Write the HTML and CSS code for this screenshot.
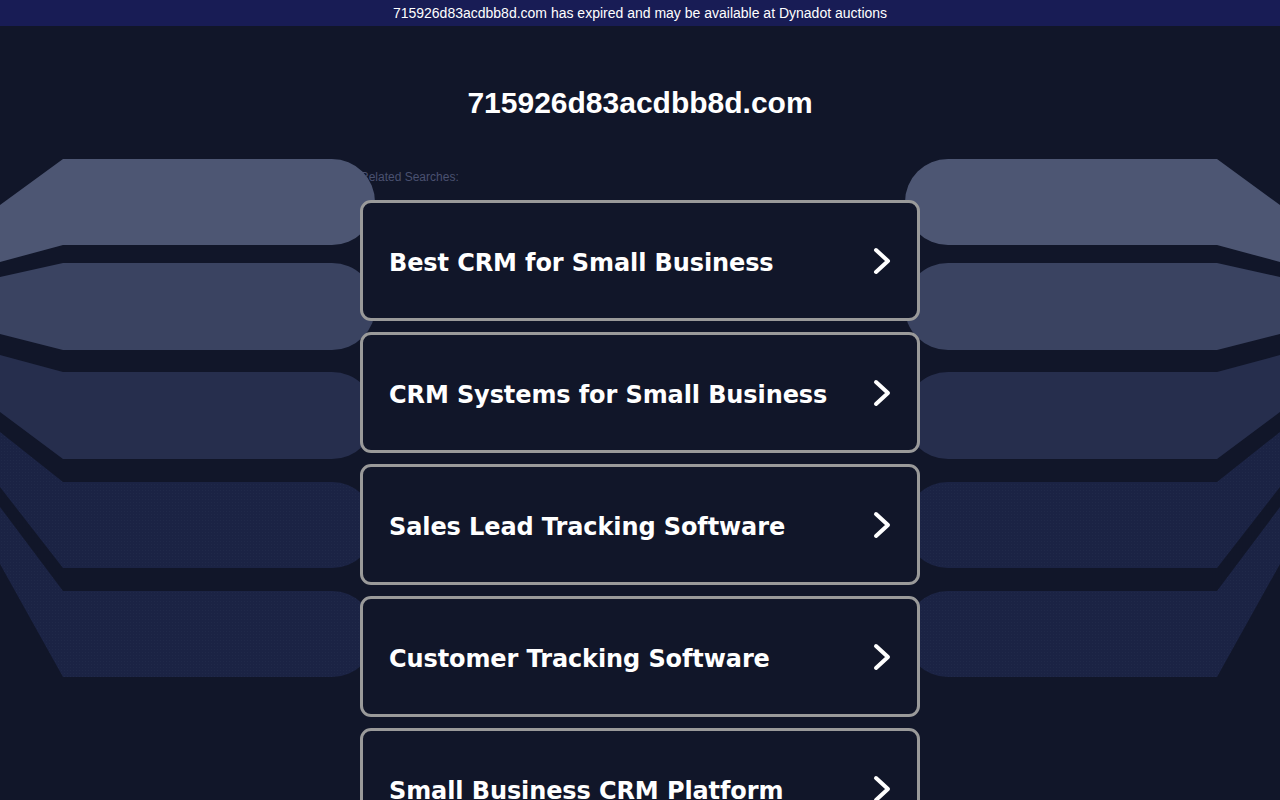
FILE: index.html
```html
<!DOCTYPE html>
<html lang="en">
<head>
<meta charset="utf-8">
<title>715926d83acdbb8d.com</title>
<link rel="stylesheet" href="styles.css">
</head>
<body>
<div class="topbar">715926d83acdbb8d.com has expired and may be available at Dynadot auctions</div>
<svg class="decor" viewBox="0 0 1280 800" width="1280" height="800" aria-hidden="true">
  <defs>
    <pattern id="dots" width="3" height="3" patternUnits="userSpaceOnUse">
      <rect width="3" height="3" fill="#1b2344"/>
      <rect x="1" y="1" width="1" height="1" fill="#202949"/>
    </pattern>
    <g id="fan">
      <path d="M0,205 L63,159 L332,159 A43,43 0 0 1 332,245 L63,245 L0,262 Z" fill="#4d5673"/>
      <path d="M0,277 L63,263 L332,263 A43.5,43.5 0 0 1 332,350 L63,350 L0,334 Z" fill="#3a4361"/>
      <path d="M0,355 L63,372 L332,372 A43.5,43.5 0 0 1 332,459 L63,459 L0,412 Z" fill="#262e4d"/>
      <path d="M0,432 L63,482 L332,482 A43,43 0 0 1 332,568 L63,568 L0,487 Z" fill="url(#dots)"/>
      <path d="M0,507 L63,591 L332,591 A43,43 0 0 1 332,677 L63,677 L0,564 Z" fill="url(#dots)"/>
    </g>
  </defs>
  <use href="#fan"/>
  <use href="#fan" transform="translate(1280,0) scale(-1,1)"/>
</svg>
<main class="content">
  <h1 class="domain">715926d83acdbb8d.com</h1>
  <div class="related">Related Searches:</div>
  <div class="cards">
    <a class="card" href="#"><span class="card-text">Best CRM for Small Business</span><svg class="chev" viewBox="0 0 18 28" width="18" height="28"><path d="M3,3 L15,14 L3,25" fill="none" stroke="#fff" stroke-width="4" stroke-linecap="round" stroke-linejoin="round"/></svg></a>
    <a class="card" href="#"><span class="card-text">CRM Systems for Small Business</span><svg class="chev" viewBox="0 0 18 28" width="18" height="28"><path d="M3,3 L15,14 L3,25" fill="none" stroke="#fff" stroke-width="4" stroke-linecap="round" stroke-linejoin="round"/></svg></a>
    <a class="card" href="#"><span class="card-text">Sales Lead Tracking Software</span><svg class="chev" viewBox="0 0 18 28" width="18" height="28"><path d="M3,3 L15,14 L3,25" fill="none" stroke="#fff" stroke-width="4" stroke-linecap="round" stroke-linejoin="round"/></svg></a>
    <a class="card" href="#"><span class="card-text">Customer Tracking Software</span><svg class="chev" viewBox="0 0 18 28" width="18" height="28"><path d="M3,3 L15,14 L3,25" fill="none" stroke="#fff" stroke-width="4" stroke-linecap="round" stroke-linejoin="round"/></svg></a>
    <a class="card" href="#"><span class="card-text">Small Business CRM Platform</span><svg class="chev" viewBox="0 0 18 28" width="18" height="28"><path d="M3,3 L15,14 L3,25" fill="none" stroke="#fff" stroke-width="4" stroke-linecap="round" stroke-linejoin="round"/></svg></a>
  </div>
</main>
</body>
</html>
```

FILE: styles.css
```css
html, body {
  margin: 0;
  padding: 0;
}
body {
  background: #111629;
  font-family: "Liberation Sans", Arial, sans-serif;
  color: #fff;
  position: relative;
  min-height: 800px;
}
.topbar {
  height: 26px;
  line-height: 26px;
  background: #181c55;
  color: #fff;
  font-size: 14px;
  text-align: center;
}
.decor {
  position: absolute;
  left: 0;
  top: 0;
  display: block;
}
.content {
  width: 560px;
  margin: 0 auto;
}
.domain {
  margin: 0;
  padding-top: 59px;
  font-size: 30px;
  line-height: 36px;
  font-weight: bold;
  text-align: center;
  color: #fff;
}
.related {
  margin-top: 49px;
  font-size: 12px;
  line-height: 14px;
  color: #4a5170;
}
.cards {
  margin-top: 16px;
  display: flex;
  flex-direction: column;
  gap: 11px;
  position: relative;
  z-index: 1;
}
.card {
  box-sizing: border-box;
  height: 121px;
  display: flex;
  align-items: center;
  justify-content: space-between;
  padding: 0 26px 0 26px;
  border: 3px solid #9a9a9a;
  border-radius: 11px;
  background: #111629;
  text-decoration: none;
  color: #fff;
}
.card-text {
  font-family: "DejaVu Sans", Verdana, sans-serif;
  font-weight: bold;
  font-size: 24px;
  line-height: 30px;
  letter-spacing: -0.1px;
  padding-top: 4px;
}
.chev {
  display: block;
  flex: none;
  margin-top: 1px;
}
```
